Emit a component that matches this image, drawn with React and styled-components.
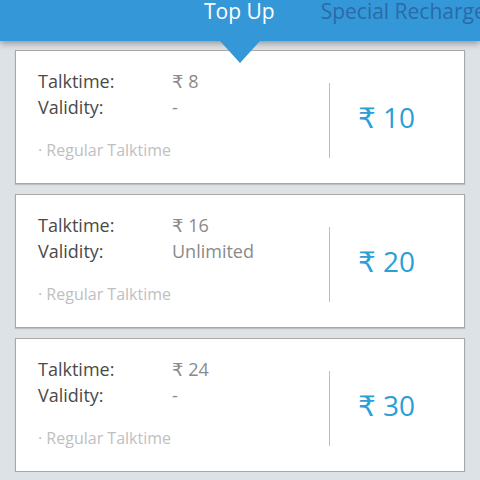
import React from "react";
import styled, { createGlobalStyle } from "styled-components";

const Global = createGlobalStyle`
  html, body { margin: 0; padding: 0; background: #dde2e6; }
  body { font-family: "Open Sans", "DejaVu Sans", sans-serif; overflow: hidden; }
  * { box-sizing: border-box; }
`;

const Header = styled.header`
  position: relative;
  z-index: 2;
  height: 41px;
  background: #3498d8;
  box-shadow: 0 2px 7px rgba(0, 0, 0, 0.38);
  display: flex;
  align-items: flex-start;
  padding-left: 204px;
  gap: 46px;
  white-space: nowrap;
  overflow: visible;
`;

const Tab = styled.div`
  font-size: 21px;
  line-height: 20px;
  padding-top: 1px;
  color: ${(p) => (p.$active ? "#ffffff" : "#2a6aa8")};
`;

const Pointer = styled.div`
  position: absolute;
  top: 100%;
  left: 50%;
  transform: translateX(-50%);
  width: 0;
  height: 0;
  border-left: 20px solid transparent;
  border-right: 20px solid transparent;
  border-top: 22px solid #3498d8;
`;

const List = styled.main`
  display: flex;
  flex-direction: column;
  gap: 10px;
  padding: 9px 15px 0;
`;

const Card = styled.section`
  display: flex;
  height: 134px;
  background: #fff;
  border: 1px solid #a8a8a8;
  box-shadow: 0 1px 1px rgba(0, 0, 0, 0.15);
`;

const Info = styled.div`
  width: 313px;
  padding: 17px 0 0 22px;
`;

const Row = styled.div`
  display: grid;
  grid-template-columns: 134px 1fr;
  font-size: 18px;
  line-height: 26px;
`;

const Label = styled.span`
  color: #4a4a4a;
`;

const Value = styled.span`
  color: #8a8a8a;
`;

const Note = styled.div`
  margin-top: 19px;
  font-size: 16px;
  line-height: 22px;
  color: #c0c0c0;
`;

const Divider = styled.div`
  width: 1px;
  height: 75px;
  margin-top: 32px;
  background: #bdbdbd;
`;

const Price = styled.div`
  align-self: center;
  padding-left: 28px;
  font-size: 28px;
  line-height: 34px;
  color: #2a9fd6;
  white-space: nowrap;
`;

const plans = [
  { talktime: "₹ 8", validity: "-", price: "₹ 10" },
  { talktime: "₹ 16", validity: "Unlimited", price: "₹ 20" },
  { talktime: "₹ 24", validity: "-", price: "₹ 30" },
];

export default function App() {
  return (
    <>
      <Global />
      <Header>
        <Tab $active>Top Up</Tab>
        <Tab>Special Recharge</Tab>
        <Pointer />
      </Header>
      <List>
        {plans.map((p, i) => (
          <Card key={i}>
            <Info>
              <Row>
                <Label>Talktime:</Label>
                <Value>{p.talktime}</Value>
              </Row>
              <Row>
                <Label>Validity:</Label>
                <Value>{p.validity}</Value>
              </Row>
              <Note>· Regular Talktime</Note>
            </Info>
            <Divider />
            <Price>{p.price}</Price>
          </Card>
        ))}
      </List>
    </>
  );
}
